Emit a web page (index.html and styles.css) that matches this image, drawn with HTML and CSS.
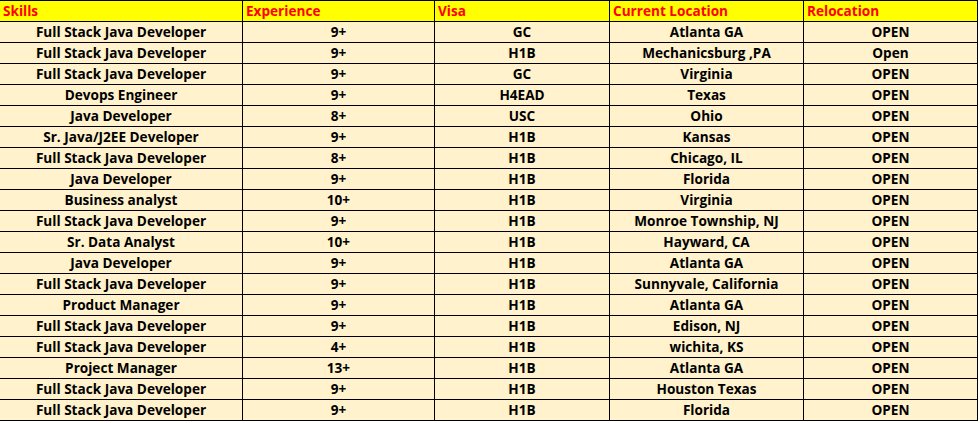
FILE: index.html
```html
<!DOCTYPE html>
<html>
<head>
<meta charset="utf-8">
<link rel="stylesheet" href="styles.css">
</head>
<body>
<div class="sheet" role="table">
  <div class="cell head">Skills</div>
  <div class="cell head">Experience</div>
  <div class="cell head">Visa</div>
  <div class="cell head">Current Location</div>
  <div class="cell head">Relocation</div>

  <div class="cell">Full Stack Java Developer</div><div class="cell">9+</div><div class="cell">GC</div><div class="cell">Atlanta GA</div><div class="cell">OPEN</div>
  <div class="cell">Full Stack Java Developer</div><div class="cell">9+</div><div class="cell">H1B</div><div class="cell">Mechanicsburg ,PA</div><div class="cell">Open</div>
  <div class="cell">Full Stack Java Developer</div><div class="cell">9+</div><div class="cell">GC</div><div class="cell">Virginia</div><div class="cell">OPEN</div>
  <div class="cell">Devops Engineer</div><div class="cell">9+</div><div class="cell">H4EAD</div><div class="cell">Texas</div><div class="cell">OPEN</div>
  <div class="cell">Java Developer</div><div class="cell">8+</div><div class="cell">USC</div><div class="cell">Ohio</div><div class="cell">OPEN</div>
  <div class="cell">Sr. Java/J2EE Developer</div><div class="cell">9+</div><div class="cell">H1B</div><div class="cell">Kansas</div><div class="cell">OPEN</div>
  <div class="cell">Full Stack Java Developer</div><div class="cell">8+</div><div class="cell">H1B</div><div class="cell">Chicago, IL</div><div class="cell">OPEN</div>
  <div class="cell">Java Developer</div><div class="cell">9+</div><div class="cell">H1B</div><div class="cell">Florida</div><div class="cell">OPEN</div>
  <div class="cell">Business analyst</div><div class="cell">10+</div><div class="cell">H1B</div><div class="cell">Virginia</div><div class="cell">OPEN</div>
  <div class="cell">Full Stack Java Developer</div><div class="cell">9+</div><div class="cell">H1B</div><div class="cell">Monroe Township, NJ</div><div class="cell">OPEN</div>
  <div class="cell">Sr. Data Analyst</div><div class="cell">10+</div><div class="cell">H1B</div><div class="cell">Hayward, CA</div><div class="cell">OPEN</div>
  <div class="cell">Java Developer</div><div class="cell">9+</div><div class="cell">H1B</div><div class="cell">Atlanta GA</div><div class="cell">OPEN</div>
  <div class="cell">Full Stack Java Developer</div><div class="cell">9+</div><div class="cell">H1B</div><div class="cell">Sunnyvale, California</div><div class="cell">OPEN</div>
  <div class="cell">Product Manager</div><div class="cell">9+</div><div class="cell">H1B</div><div class="cell">Atlanta GA</div><div class="cell">OPEN</div>
  <div class="cell">Full Stack Java Developer</div><div class="cell">9+</div><div class="cell">H1B</div><div class="cell">Edison, NJ</div><div class="cell">OPEN</div>
  <div class="cell">Full Stack Java Developer</div><div class="cell">4+</div><div class="cell">H1B</div><div class="cell">wichita, KS</div><div class="cell">OPEN</div>
  <div class="cell">Project Manager</div><div class="cell">13+</div><div class="cell">H1B</div><div class="cell">Atlanta GA</div><div class="cell">OPEN</div>
  <div class="cell">Full Stack Java Developer</div><div class="cell">9+</div><div class="cell">H1B</div><div class="cell">Houston Texas</div><div class="cell">OPEN</div>
  <div class="cell">Full Stack Java Developer</div><div class="cell">9+</div><div class="cell">H1B</div><div class="cell">Florida</div><div class="cell">OPEN</div>
</div>
</body>
</html>
```

FILE: styles.css
```css
html, body {
  margin: 0;
  padding: 0;
  background: #ffffff;
}

.sheet {
  display: grid;
  grid-template-columns: 243px 192px 175px 194px 174px;
  grid-auto-rows: 21px;
  width: 978px;
  border-top: 1px solid #000000;
  font-family: "Open Sans", "Liberation Sans", sans-serif;
  font-weight: 700;
  font-size: 13.6px;
  color: #000000;
}

.cell {
  box-sizing: border-box;
  height: 21px;
  border-right: 1px solid #000000;
  border-bottom: 1px solid #000000;
  background: #fff2cc;
  text-align: center;
  line-height: 20px;
  white-space: nowrap;
  overflow: hidden;
}

.head {
  background: #ffff00;
  color: #ff0000;
  text-align: left;
  padding-left: 3px;
}
```
